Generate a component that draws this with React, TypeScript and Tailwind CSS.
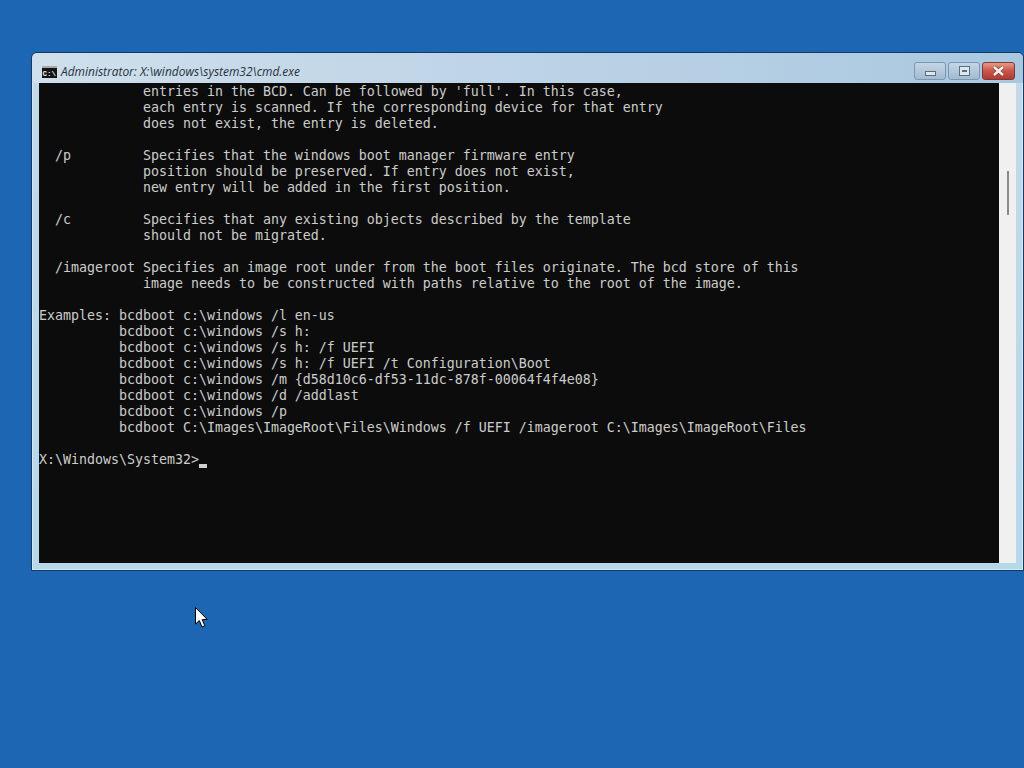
const lines = [
  "             entries in the BCD. Can be followed by 'full'. In this case,",
  "             each entry is scanned. If the corresponding device for that entry",
  "             does not exist, the entry is deleted.",
  "",
  "  /p         Specifies that the windows boot manager firmware entry",
  "             position should be preserved. If entry does not exist,",
  "             new entry will be added in the first position.",
  "",
  "  /c         Specifies that any existing objects described by the template",
  "             should not be migrated.",
  "",
  "  /imageroot Specifies an image root under from the boot files originate. The bcd store of this",
  "             image needs to be constructed with paths relative to the root of the image.",
  "",
  "Examples: bcdboot c:\\windows /l en-us",
  "          bcdboot c:\\windows /s h:",
  "          bcdboot c:\\windows /s h: /f UEFI",
  "          bcdboot c:\\windows /s h: /f UEFI /t Configuration\\Boot",
  "          bcdboot c:\\windows /m {d58d10c6-df53-11dc-878f-00064f4f4e08}",
  "          bcdboot c:\\windows /d /addlast",
  "          bcdboot c:\\windows /p",
  "          bcdboot C:\\Images\\ImageRoot\\Files\\Windows /f UEFI /imageroot C:\\Images\\ImageRoot\\Files",
  "",
];

export default function App() {
  return (
    <div className="relative h-[768px] w-[1024px] overflow-hidden bg-[#1c66b4] pl-[31px] pt-[52px]">
      <div className="flex h-[519px] w-[993px] flex-col rounded-t-[6px] border border-[#123a63] bg-gradient-to-b from-[#c4d9ea] to-[#b5d8ea] shadow-[inset_0_0_0_1px_#d8e8f3]">
        <div className="flex h-[30px] shrink-0 items-center rounded-t-[6px] bg-gradient-to-r from-[#cfdfec] via-[#bdd3e6] to-[#a9c8e0] pl-[10px] pr-[8px] pt-[7px]">
          <svg width="15" height="12" viewBox="0 0 15 12" className="shrink-0">
            <rect width="15" height="12" fill="#141414" />
            <rect width="15" height="2" fill="#a8a8a8" />
            <text x="0.5" y="9.8" fontSize="7.5" fontWeight="700" fill="#f0f0f0" fontFamily="'Liberation Mono', monospace">C:\</text>
          </svg>
          <span className="ml-[4px] font-['Open_Sans','Noto_Sans',sans-serif] text-[11.95px] italic leading-none text-[#27323c]">
            Administrator: X:\windows\system32\cmd.exe
          </span>
          <div className="ml-auto flex items-start gap-[2px] self-start pt-[2px]">
            <div className="flex h-[18px] w-[32px] items-center justify-center rounded-[3px] border border-[#7c97b0] bg-gradient-to-b from-[#c3d6e6] to-[#a3bbd0]">
              <div className="mt-[4px] h-[5px] w-[11px] border border-[#5a6e82] bg-[#dfe7ee]" />
            </div>
            <div className="flex h-[18px] w-[32px] items-center justify-center rounded-[3px] border border-[#7c97b0] bg-gradient-to-b from-[#c3d6e6] to-[#a3bbd0]">
              <div className="flex h-[10px] w-[11px] items-center justify-center border border-[#5a6e82] bg-[#dfe7ee]">
                <div className="h-[2px] w-[5px] bg-[#5a6e82]" />
              </div>
            </div>
            <div className="flex h-[18px] w-[33px] items-center justify-center rounded-[3px] border border-[#7d3a38] bg-gradient-to-b from-[#e59a85] via-[#c9544a] to-[#b23a30]">
              <svg width="13" height="10" viewBox="0 0 13 10">
                <path d="M2 1 L11 9 M11 1 L2 9" stroke="#6b3f3a" strokeWidth="3.8" />
                <path d="M2 1 L11 9 M11 1 L2 9" stroke="#f5efe9" strokeWidth="2.6" />
              </svg>
            </div>
          </div>
        </div>
        <div className="ml-[7px] mr-[7px] flex min-h-0 flex-1">
          <div className="h-[480px] w-[960px] overflow-hidden bg-[#0c0c0c]">
            <pre className="pt-[1px] font-['DejaVu_Sans_Mono',monospace] text-[13.29px] leading-[16px] text-[#cccccc]">
              {lines.map((l, i) => (
                <div key={i} className="h-[16px]">{l}</div>
              ))}
              <div className="relative h-[16px]">
                X:\Windows\System32&gt;
                <span className="absolute left-[160px] top-[12px] h-[4px] w-[8px] bg-[#d0d0d0]" />
              </div>
            </pre>
          </div>
          <div className="h-[480px] w-[17px] bg-[#f0f0f0] pl-[8px] pt-[88px]">
            <div className="h-[44px] w-[2px] bg-[#8a8a8a]" />
          </div>
        </div>
      </div>
      <svg className="absolute left-[195px] top-[607px]" width="13" height="22" viewBox="0 0 13 22">
        <path d="M0.5 0.5 V17 L4.3 13.5 L7 20 L9.8 18.8 L7.2 12.6 L12.2 12.4 Z" fill="#ffffff" stroke="#000000" strokeWidth="1" />
      </svg>
    </div>
  );
}
